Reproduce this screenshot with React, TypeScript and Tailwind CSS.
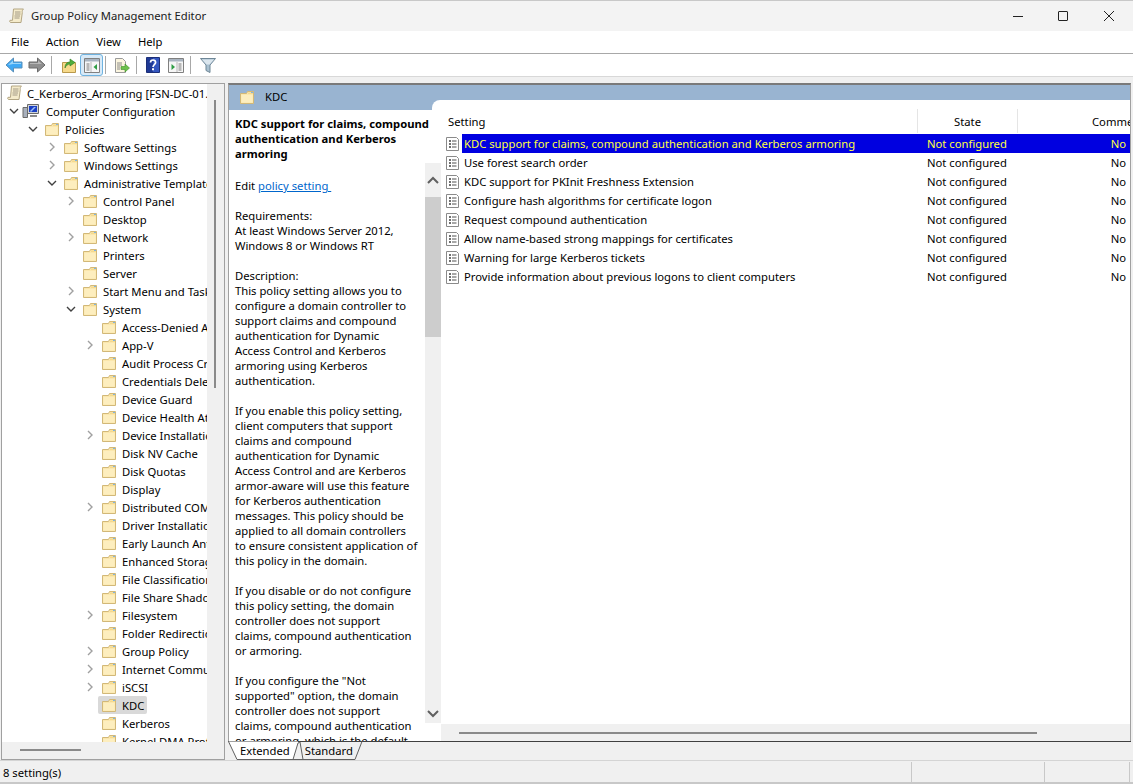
const FONT = "font-['Noto_Sans','Open_Sans',sans-serif]";

type TreeRow = { label: string; depth: number; caret?: 'open' | 'closed'; selected?: boolean };

const treeRows: TreeRow[] = [
  { label: 'Policies', depth: 1, caret: 'open' },
  { label: 'Software Settings', depth: 2, caret: 'closed' },
  { label: 'Windows Settings', depth: 2, caret: 'closed' },
  { label: 'Administrative Templates', depth: 2, caret: 'open' },
  { label: 'Control Panel', depth: 3, caret: 'closed' },
  { label: 'Desktop', depth: 3 },
  { label: 'Network', depth: 3, caret: 'closed' },
  { label: 'Printers', depth: 3 },
  { label: 'Server', depth: 3 },
  { label: 'Start Menu and Taskbar', depth: 3, caret: 'closed' },
  { label: 'System', depth: 3, caret: 'open' },
  { label: 'Access-Denied Assistance', depth: 4 },
  { label: 'App-V', depth: 4, caret: 'closed' },
  { label: 'Audit Process Creation', depth: 4 },
  { label: 'Credentials Delegation', depth: 4 },
  { label: 'Device Guard', depth: 4 },
  { label: 'Device Health Attestation', depth: 4 },
  { label: 'Device Installation', depth: 4, caret: 'closed' },
  { label: 'Disk NV Cache', depth: 4 },
  { label: 'Disk Quotas', depth: 4 },
  { label: 'Display', depth: 4 },
  { label: 'Distributed COM', depth: 4, caret: 'closed' },
  { label: 'Driver Installation', depth: 4 },
  { label: 'Early Launch Antimalware', depth: 4 },
  { label: 'Enhanced Storage Access', depth: 4 },
  { label: 'File Classification', depth: 4 },
  { label: 'File Share Shadow Copy', depth: 4 },
  { label: 'Filesystem', depth: 4, caret: 'closed' },
  { label: 'Folder Redirection', depth: 4 },
  { label: 'Group Policy', depth: 4, caret: 'closed' },
  { label: 'Internet Communication', depth: 4, caret: 'closed' },
  { label: 'iSCSI', depth: 4, caret: 'closed' },
  { label: 'KDC', depth: 4, selected: true },
  { label: 'Kerberos', depth: 4 },
  { label: 'Kernel DMA Protection', depth: 4 },
];

const settings = [
  'KDC support for claims, compound authentication and Kerberos armoring',
  'Use forest search order',
  'KDC support for PKInit Freshness Extension',
  'Configure hash algorithms for certificate logon',
  'Request compound authentication',
  'Allow name-based strong mappings for certificates',
  'Warning for large Kerberos tickets',
  'Provide information about previous logons to client computers',
];

const paragraphs = [
  ['This policy setting allows you to', 'configure a domain controller to', 'support claims and compound', 'authentication for Dynamic', 'Access Control and Kerberos', 'armoring using Kerberos', 'authentication.'],
  ['If you enable this policy setting,', 'client computers that support', 'claims and compound', 'authentication for Dynamic', 'Access Control and are Kerberos', 'armor-aware will use this feature', 'for Kerberos authentication', 'messages. This policy should be', 'applied to all domain controllers', 'to ensure consistent application of', 'this policy in the domain.'],
  ['If you disable or do not configure', 'this policy setting, the domain', 'controller does not support', 'claims, compound authentication', 'or armoring.'],
  ['If you configure the "Not', 'supported" option, the domain', 'controller does not support', 'claims, compound authentication', 'or armoring, which is the default'],
];

function Folder() {
  return (
    <svg width="16" height="16" viewBox="0 0 16 16" className="shrink-0">
      <path d="M1.5 4.5h6l1-2h6v12h-13z" fill="#fbe7ad" stroke="#d2b878" />
      <path d="M2.5 6h11v7.500h-11z" fill="#fdeebf" />
      <path d="M9 3.500h5v1.500H9z" fill="#f4d98e" />
      <path d="M12 3h2v1h-2z" fill="#7fb4e0" />
    </svg>
  );
}

function Caret({ kind }: { kind?: 'open' | 'closed' }) {
  if (!kind) return <span className="w-[16px] shrink-0" />;
  return (
    <svg width="16" height="16" viewBox="0 0 16 16" className="shrink-0" fill="none">
      {kind === 'open' ? (
        <path d="M4 6l4 4 4-4" stroke="#404040" strokeWidth="1.4" />
      ) : (
        <path d="M6 4l4 4-4 4" stroke="#a0a0a0" strokeWidth="1.4" />
      )}
    </svg>
  );
}

function Scroll() {
  return (
    <svg width="16" height="16" viewBox="0 0 16 16" className="shrink-0">
      <path d="M4.500 1h10c-1 1-1.500 2-1.200 3.500L12 14.500H2c-1.200 0-1.800-1-1-2.200h2.500L4.500 1z" fill="#f5ebcb" stroke="#b3a684" />
      <path d="M6 4h5.500M6 6h5.500M5.500 8h5.500M5.500 10h5" stroke="#a39a86" />
    </svg>
  );
}

function PolicyIcon() {
  return (
    <svg width="16" height="16" viewBox="0 0 16 16" className="shrink-0">
      <path d="M1.500 1.500h10l2 2v11h-12z" fill="#fff" stroke="#8a8a8a" />
      <path d="M4 5h2M4 8h2M4 11h2" stroke="#404040" strokeWidth="1.400" />
      <path d="M7 5h4.500M7 8h4.500M7 11h4.500" stroke="#505050" />
    </svg>
  );
}

function ToolSep({ after }: { after: string }) {
  return <span className={`ml-[3px] h-[18px] w-px bg-[#a8a8a8] ${after}`} />;
}

function ToolBtn({ children, active }: { children: React.ReactNode; active?: boolean }) {
  return (
    <span className={`flex h-[22px] w-[23px] items-center justify-center rounded-[3px] border ${active ? 'border-[#6fb3e0] bg-[#d8eaf8]' : 'border-transparent'}`}>
      {children}
    </span>
  );
}

function PaneGlyph({ arrow }: { arrow: 'left' | 'right' }) {
  return (
    <svg width="16" height="15" viewBox="0 0 16 15">
      <path d="M.5 .5h15v14H.5z" fill="#f6f6f6" stroke="#808080" />
      <path d="M1 1h14v2.500H1z" fill="#a9b4c0" />
      {arrow === 'left' ? (
        <>
          <path d="M2.500 6h3M2.500 8h3M2.500 10h3M2.500 12h3" stroke="#7a7a7a" />
          <path d="M7 4v10" stroke="#b8b8b8" />
          <path d="M13 6v6L9.500 9z" fill="#2f9e44" />
        </>
      ) : (
        <>
          <path d="M3.500 6v6L7 9z" fill="#2f9e44" />
          <path d="M9 4v10" stroke="#b8b8b8" />
          <path d="M10.500 6h3M10.500 8h3M10.500 10h3M10.500 12h3" stroke="#7a7a7a" />
        </>
      )}
    </svg>
  );
}

export default function App() {
  return (
    <div className={`${FONT} flex h-[784px] w-[1133px] flex-col overflow-hidden bg-[#f0f0f0] text-[11.25px] leading-[15px] text-black`}>
      {/* title bar */}
      <div className="flex h-[31px] shrink-0 items-center border-t border-[#c8c8c8] bg-[#f3f3f3] pl-[9px]">
        <Scroll />
        <span className="mb-[2px] ml-[6px] text-[#202020]">Group Policy Management Editor</span>
        <div className="ml-auto flex items-center gap-[35px] pr-[19px]">
          <span className="h-px w-[10px] bg-[#222]" />
          <span className="h-[10px] w-[10px] rounded-[1px] border border-[#222]" />
          <svg width="10" height="10" viewBox="0 0 10 10" className="ml-px">
            <path d="M0 0l10 10M10 0L0 10" stroke="#222" strokeWidth="1" />
          </svg>
        </div>
      </div>

      {/* menu */}
      <div className="flex h-[23px] shrink-0 items-center gap-[17px] border-b border-[#a8a8a8] bg-white pb-[2px] pl-[11px]">
        <span>File</span>
        <span>Action</span>
        <span>View</span>
        <span>Help</span>
      </div>

      {/* toolbar */}
      <div className="flex h-[23px] shrink-0 items-center border-b border-[#d8d8d8] bg-white pl-[2px]">
        <ToolBtn>
          <svg width="18" height="16" viewBox="0 0 18 16">
            <path d="M1 8l7.500-7v4H17v6H8.500v4z" fill="#3fa9f5" stroke="#5a8fb8" />
            <path d="M3 8l5-4.500V6h8v1H8z" fill="#9ad6fb" />
          </svg>
        </ToolBtn>
        <ToolBtn>
          <svg width="18" height="16" viewBox="0 0 18 16">
            <path d="M17 8L9.500 1v4H1v6h8.500v4z" fill="#8f8f8f" stroke="#6a6a6a" />
            <path d="M2 6h8V3.500L14 7H2z" fill="#b8b8b8" />
          </svg>
        </ToolBtn>
        <ToolSep after="mr-[5px]" />
        <ToolBtn>
          <svg width="16" height="17" viewBox="0 0 16 17">
            <path d="M1.500 5.500h13v10h-13z" fill="#f6d98a" stroke="#b9994c" />
            <path d="M4 11c0-4 2-6 5-6V2l5 3.500L9 9V7C7 7 5 8.500 4 11z" fill="#4fae3c" stroke="#2d7a22" strokeWidth=".6" />
          </svg>
        </ToolBtn>
        <ToolBtn active>
          <PaneGlyph arrow="left" />
        </ToolBtn>
        <span className="ml-[2px] mr-[4px] h-[18px] w-px bg-[#a8a8a8]" />
        <ToolBtn>
          <svg width="17" height="17" viewBox="0 0 17 17">
            <path d="M2.500 1.500h7l3 3v11h-10z" fill="#fbf5df" stroke="#9a9a9a" />
            <path d="M4 6h5M4 8h5M4 10h3M4 12h3" stroke="#8a8a8a" />
            <path d="M8 9.500h4V7l4.500 4-4.500 4v-2.500H8z" fill="#6cc24a" stroke="#3c8f26" strokeWidth=".6" />
          </svg>
        </ToolBtn>
        <ToolSep after="mr-[4px]" />
        <ToolBtn>
          <svg width="14" height="16" viewBox="0 0 14 16">
            <path d="M.5 .5h13v15H.5z" fill="#3457c0" stroke="#1c2f78" />
            <path d="M1 1h6v14H1z" fill="#1f3a96" />
            <path d="M4.500 5.500C4.500 3.800 5.700 3 7 3s2.600.8 2.600 2.500S7.300 7.800 7 10" fill="none" stroke="#fff" strokeWidth="1.700" />
            <path d="M6 11.300h2v2H6z" fill="#fff" />
          </svg>
        </ToolBtn>
        <ToolBtn>
          <PaneGlyph arrow="right" />
        </ToolBtn>
        <ToolSep after="mr-[5px]" />
        <ToolBtn>
          <svg width="16" height="15" viewBox="0 0 16 15">
            <path d="M.5 .5h15L10 7v7.500L6 12.500V7z" fill="#a9c0d0" stroke="#6f8797" />
            <path d="M2 1.500h12L9.500 6.500h-3z" fill="#dbe6ee" />
          </svg>
        </ToolBtn>
      </div>

      {/* body */}
      <div className="flex h-[683px] shrink-0 gap-[3px] pl-px pr-[2px] pt-[6px]">
        {/* tree pane */}
        <div className="flex w-[224px] shrink-0 flex-col border border-[#a0a0a0] bg-[#f0f0f0]">
          <div className="flex min-h-0 flex-1">
            <div className="h-[658px] w-[205px] shrink-0 overflow-hidden bg-white">
              <div className="flex h-[18px] items-center gap-[4px] whitespace-nowrap pl-[5px]">
                <Scroll />
                <span>C_Kerberos_Armoring [FSN-DC-01.ad.example.com] Policy</span>
              </div>
              <div className="flex h-[18px] items-center whitespace-nowrap pl-[4px]">
                <Caret kind="open" />
                <svg width="18" height="16" viewBox="0 0 18 16" className="mr-[6px] shrink-0">
                  <path d="M1 4.500h4.500v10H1z" fill="#a8b0bc" stroke="#6a6a6a" />
                  <path d="M5.500 1.500h11v9h-11z" fill="#d0d4da" stroke="#6a6a6a" />
                  <path d="M7 3h8v6H7z" fill="#1a3fc4" />
                  <path d="M8 8l4-4h2L9 9z" fill="#9fc0f5" />
                  <path d="M8 12h7v2H8z" fill="#8a8a8a" />
                </svg>
                <span>Computer Configuration</span>
              </div>
              {treeRows.map((row) => (
                <div
                  key={row.label}
                  className="flex h-[18px] items-center whitespace-nowrap"
                  style={{ paddingLeft: 4 + row.depth * 19 }}
                >
                  <Caret kind={row.caret} />
                  <span className={`flex h-[18px] items-center gap-[5px] pl-[3px] pr-[3px] ${row.selected ? 'rounded-[2px] bg-[#d9d9d9]' : ''}`}>
                    <Folder />
                    <span>{row.label}</span>
                  </span>
                </div>
              ))}
            </div>
            {/* vertical scrollbar */}
            <div className="flex w-[17px] shrink-0 justify-center pt-[16px]">
              <span className="ml-[-1px] h-[288px] w-[2px] bg-[#8a8a8a]" />
            </div>
          </div>
          <div className="flex h-[18px] shrink-0 items-center pl-[18px]">
            <span className="h-[2px] w-[61px] bg-[#8a8a8a]" />
          </div>
        </div>

        {/* details */}
        <div className="flex min-w-0 flex-1 flex-col">
          <div className="flex h-[658px] shrink-0 flex-col border-x border-t-2 border-[#a0a0a0] border-t-[#7a7a7a] bg-white">
            <div className="flex h-[25px] shrink-0 items-center gap-[10px] bg-[#99b4d1] pb-[2px] pl-[10px]">
              <Folder />
              <span>KDC</span>
            </div>
            <div className="flex min-h-0 flex-1">
              {/* description, the heading runs on above the scrollbar */}
              <div className="-mr-[10px] w-[206px] shrink-0 overflow-hidden pl-[6px] pt-[6px]">
                <p className="whitespace-nowrap font-bold">KDC support for claims, compound<br />authentication and Kerberos<br />armoring</p>
                <p className="mt-[17px]">
                  Edit <span className="text-[#0066cc] underline">policy setting&nbsp;</span>
                </p>
                <p className="mt-[15px]">Requirements:<br />At least Windows Server 2012,<br />Windows 8 or Windows RT</p>
                <p className="mt-[15px]">Description:</p>
                {paragraphs.map((lines, i) => (
                  <p key={i} className={i === 0 ? '' : 'mt-[15px]'}>
                    {lines.map((line) => (
                      <span key={line} className="block whitespace-nowrap">{line}</span>
                    ))}
                  </p>
                ))}
              </div>
              {/* description scrollbar */}
              <div className="relative flex w-[16px] shrink-0 flex-col pt-[53px]">
                <div className="flex h-[560px] flex-col items-center bg-[#f0f0f0]">
                  <svg width="16" height="34" viewBox="0 0 16 34" className="shrink-0">
                    <path d="M3 20l5-5 5 5" fill="none" stroke="#606060" strokeWidth="2" />
                  </svg>
                  <span className="h-[140px] w-full shrink-0 bg-[#cdcdcd]" />
                  <svg width="16" height="14" viewBox="0 0 16 14" className="mt-auto shrink-0">
                    <path d="M3 2l5 5 5-5" fill="none" stroke="#606060" strokeWidth="2" />
                  </svg>
                </div>
              </div>
              {/* settings list */}
              <div className="relative -mt-[10px] flex min-w-0 flex-1 flex-col bg-white">
                <span className="absolute -left-[9px] top-0 h-[10px] w-[10px] rounded-tl-[8px] bg-white" />
                <div className="flex h-[34px] shrink-0 items-end pb-[1px]">
                  <span className="ml-[7px] w-[469px] shrink-0 pb-[4px]">Setting</span>
                  <span className="h-[24px] w-px bg-[#e5e5e5]" />
                  <span className="w-[99px] shrink-0 pb-[4px] text-center">State</span>
                  <span className="h-[24px] w-px bg-[#e5e5e5]" />
                  <span className="flex-1 overflow-hidden whitespace-nowrap pb-[4px] pl-[74px]">Comment</span>
                </div>
                {settings.map((name, i) => (
                  <div key={name} className="flex h-[19px] shrink-0 items-center pl-[4px]">
                    <PolicyIcon />
                    <span className={`ml-px flex h-[19px] min-w-0 flex-1 items-center whitespace-nowrap ${i === 0 ? 'bg-[#0000e0] text-[#ffff40]' : ''}`}>
                      <span className="w-[465px] shrink-0 pl-[2px]">{name}</span>
                      <span className="w-[100px] shrink-0">Not configured</span>
                      <span className="ml-auto pr-[4px]">No</span>
                    </span>
                  </div>
                ))}
                <div className="mt-auto flex h-[17px] shrink-0 items-center bg-[#f0f0f0] pl-[18px]">
                  <span className="h-[2px] w-[578px] bg-[#8a8a8a]" />
                </div>
              </div>
            </div>
          </div>
          {/* tabs */}
          <div className="relative flex h-[19px] shrink-0 items-center border-t border-[#404040] pb-[2px] pl-[12px]">
            <svg width="140" height="19" viewBox="0 0 140 19" className="absolute -top-px left-0" fill="none">
              <path d="M0.500 0.500L9 18.500H65L70 0.500z" fill="#fff" />
              <path d="M0.500 0.500L9 18.500H65L70 2" stroke="#606060" />
              <path d="M65 18.500H75M70 2L72 1M72 1L75 18.500H127L134 0.500" stroke="#606060" />
            </svg>
            <span className="relative">Extended</span>
            <span className="relative ml-[15px]">Standard</span>
          </div>
        </div>
      </div>

      {/* status bar */}
      <div className="flex h-[24px] shrink-0 items-center border-b-2 border-t border-[#d4d4d4] border-b-[#c8c8c8] pl-[3px]">
        <span className="mt-[2px] w-[908px] shrink-0">8 setting(s)</span>
        <span className="h-[20px] w-px bg-[#c8c8c8]" />
        <span className="w-[132px] shrink-0" />
        <span className="h-[20px] w-px bg-[#c8c8c8]" />
        <span className="w-[84px] shrink-0" />
        <span className="h-[20px] w-px bg-[#c8c8c8]" />
      </div>
    </div>
  );
}
